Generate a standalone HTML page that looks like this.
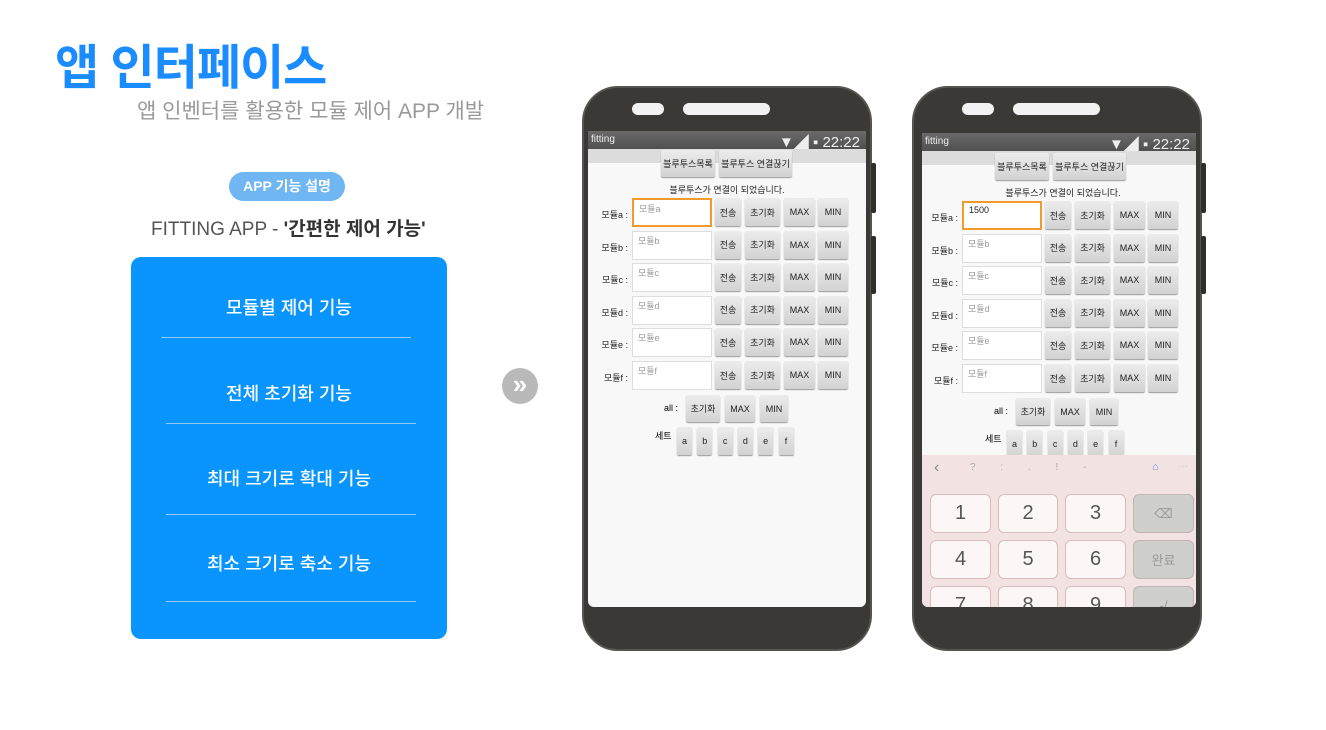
<!DOCTYPE html><html><head><meta charset="utf-8"><style>
*{margin:0;padding:0;box-sizing:border-box}
body{width:1326px;height:730px;background:#fff;position:relative;overflow:hidden;font-family:"Liberation Sans","Noto Sans CJK KR",sans-serif}
.a{position:absolute}
.t{position:absolute;white-space:nowrap}
.phone{position:absolute;width:290px;height:565px;background:#3a3935;border-radius:36px;border:2px solid #55544f}
.spk{position:absolute;background:#f2f2f2;border-radius:8px;height:12px}
.side{position:absolute;background:#2f2e2a;width:5px;border-radius:2px}
.scr{position:absolute;background:#f8f8f8;overflow:hidden;border-radius:0 0 6px 6px}
.sb{position:absolute;left:0;top:0;right:0;height:18px;background:linear-gradient(#6a6a6a,#505050);color:#eee;font-size:10px}
.band{position:absolute;left:0;top:18px;right:0;height:14px;background:#dcdcdc}
.b{position:absolute;background:linear-gradient(#ececec,#d2d2d2);border-radius:2px;box-shadow:0 1px 1px #999;font-size:9px;color:#222;display:flex;align-items:center;justify-content:center}
.tb{position:absolute;background:#fff;border:1px solid #ddd;font-size:9px;color:#999;padding:2px 0 0 5px}
.lb{position:absolute;font-size:9px;color:#222;text-align:right;width:40px}
.k{position:absolute;background:#fdf6f6;border:1px solid #d9bcbc;border-radius:6px;font-size:20px;color:#555;display:flex;align-items:center;justify-content:center}
.kg{background:#cfcfcb;border-color:#c4b4b4;color:#999;font-size:13px}
.item{position:absolute;left:0;width:316px;text-align:center;color:#fff;font-size:18px;font-weight:500}
.ln{position:absolute;height:1px;background:#8fcaf5}
</style></head><body>
<div class="t" style="left:55px;top:28px;font-size:48px;font-weight:bold;color:#1a8cff;letter-spacing:-1px">앱 인터페이스</div>
<div class="t" style="left:137px;top:95px;font-size:21px;color:#999">앱 인벤터를 활용한 모듈 제어 APP 개발</div>
<div class="a" style="left:229px;top:172px;width:116px;height:29px;background:#6fb6f2;border-radius:15px;color:#fff;font-size:14px;font-weight:bold;text-align:center;line-height:29px">APP 기능 설명</div>
<div class="t" style="left:151px;top:214px;font-size:19px;color:#555">FITTING APP - <b style="color:#333">'간편한 제어 가능'</b></div>
<div class="a" style="left:131px;top:257px;width:316px;height:382px;background:#0995fd;border-radius:10px">
<div class="item" style="top:37px">모듈별 제어 기능</div>
<div class="ln" style="left:30px;width:250px;top:80px"></div>
<div class="item" style="top:123px">전체 초기화 기능</div>
<div class="ln" style="left:35px;width:250px;top:166px"></div>
<div class="item" style="top:208px">최대 크기로 확대 기능</div>
<div class="ln" style="left:35px;width:250px;top:257px"></div>
<div class="item" style="top:293px">최소 크기로 축소 기능</div>
<div class="ln" style="left:35px;width:250px;top:344px"></div>
</div>
<div class="a" style="left:502px;top:368px;width:36px;height:36px;border-radius:50%;background:#b9b9b9;color:#fff;font-size:26px;font-weight:bold;text-align:center;line-height:33px">»</div>

<!-- phone 1 -->
<div class="phone" style="left:582px;top:86px"></div>
<div class="side" style="left:871px;top:163px;height:50px"></div>
<div class="side" style="left:871px;top:236px;height:58px"></div>
<div class="spk" style="left:632px;top:103px;width:32px"></div>
<div class="spk" style="left:683px;top:103px;width:87px"></div>
<div class="scr" style="left:588px;top:131px;width:278px;height:476px">
<div class="sb"><span class="t" style="left:3px;top:3px">fitting</span><span class="t" style="right:6px;top:0;font-size:15px">▼◢ ▪ 22:22</span></div>
<div class="band"></div>
<div class="b" style="left:73px;top:19px;width:54px;height:27px">블루투스목록</div>
<div class="b" style="left:131px;top:19px;width:73px;height:27px">블루투스 연결끊기</div>
<div class="t" style="left:0;width:278px;text-align:center;top:52px;font-size:9px;color:#222">블루투스가 연결이 되었습니다.</div>
<div id="rows1"></div>
</div>

<!-- phone 2 -->
<div class="phone" style="left:912px;top:86px"></div>
<div class="side" style="left:1201px;top:163px;height:50px"></div>
<div class="side" style="left:1201px;top:236px;height:58px"></div>
<div class="spk" style="left:962px;top:103px;width:32px"></div>
<div class="spk" style="left:1013px;top:103px;width:87px"></div>
<div class="scr" style="left:922px;top:133px;width:274px;height:474px">
<div class="sb"><span class="t" style="left:3px;top:3px">fitting</span><span class="t" style="right:6px;top:0;font-size:15px">▼◢ ▪ 22:22</span></div>
<div class="band"></div>
<div style="position:absolute;left:-4px;top:1px;width:278px;height:320px">
<div class="b" style="left:77px;top:19px;width:54px;height:27px">블루투스목록</div>
<div class="b" style="left:135px;top:19px;width:73px;height:27px">블루투스 연결끊기</div>
<div class="t" style="left:0;width:290px;text-align:center;top:52px;font-size:9px;color:#222">블루투스가 연결이 되었습니다.</div>
<div id="rows2"></div>
</div>
<div class="a" style="left:0;top:322px;width:274px;height:160px;background:#f3e2e2">
<div class="t" style="left:12px;top:4px;font-size:16px;color:#888">‹</div>
<div class="t" style="left:48px;top:7px;font-size:10px;color:#aaa;word-spacing:22px">? : . ! -</div>
<div class="t" style="left:230px;top:6px;font-size:11px;color:#6a8fd6">⌂</div>
<div class="t" style="left:256px;top:6px;font-size:10px;color:#ccc">···</div>
<div class="k" style="left:8px;top:39px;width:61px;height:39px">1</div>
<div class="k" style="left:76px;top:39px;width:60px;height:39px">2</div>
<div class="k" style="left:143px;top:39px;width:61px;height:39px">3</div>
<div class="k kg" style="left:211px;top:39px;width:61px;height:39px">⌫</div>
<div class="k" style="left:8px;top:85px;width:61px;height:39px">4</div>
<div class="k" style="left:76px;top:85px;width:60px;height:39px">5</div>
<div class="k" style="left:143px;top:85px;width:61px;height:39px">6</div>
<div class="k kg" style="left:211px;top:85px;width:61px;height:39px">완료</div>
<div class="k" style="left:8px;top:131px;width:61px;height:39px">7</div>
<div class="k" style="left:76px;top:131px;width:60px;height:39px">8</div>
<div class="k" style="left:143px;top:131px;width:61px;height:39px">9</div>
<div class="k kg" style="left:211px;top:131px;width:61px;height:39px">-/</div>
</div>
</div>
<script>
function rows(id,first){
 var h='',L='abcdef';
 for(var i=0;i<6;i++){var y=67+i*32.6;
  h+='<div class="lb" style="left:0;top:'+(y+10)+'px">모듈'+L[i]+' :</div>';
  var bs=(i==0)?'border:2px solid #f39a2c;':'';
  var tx=(i==0&&first)?'<span style="color:#222">1500</span>':'모듈'+L[i];
  h+='<div class="tb" style="left:44px;top:'+y+'px;width:80px;height:29px;'+bs+'">'+tx+'</div>';
  h+='<div class="b" style="left:127px;top:'+y+'px;width:26px;height:28px">전송</div>';
  h+='<div class="b" style="left:157px;top:'+y+'px;width:35px;height:28px">초기화</div>';
  h+='<div class="b" style="left:196px;top:'+y+'px;width:31px;height:28px">MAX</div>';
  h+='<div class="b" style="left:230px;top:'+y+'px;width:30px;height:28px">MIN</div>';}
 h+='<div class="t" style="left:76px;top:272px;font-size:9px">all :</div>';
 h+='<div class="b" style="left:98px;top:264px;width:34px;height:27px">초기화</div>';
 h+='<div class="b" style="left:137px;top:264px;width:30px;height:27px">MAX</div>';
 h+='<div class="b" style="left:172px;top:264px;width:28px;height:27px">MIN</div>';
 h+='<div class="t" style="left:67px;top:298px;font-size:9px">세트</div>';
 for(var j=0;j<6;j++)h+='<div class="b" style="left:'+(89+j*20.3)+'px;top:296px;width:15px;height:28px">'+L[j]+'</div>';
 document.getElementById(id).innerHTML=h;}
rows('rows1',false);rows('rows2',true);
</script>
</body></html>
